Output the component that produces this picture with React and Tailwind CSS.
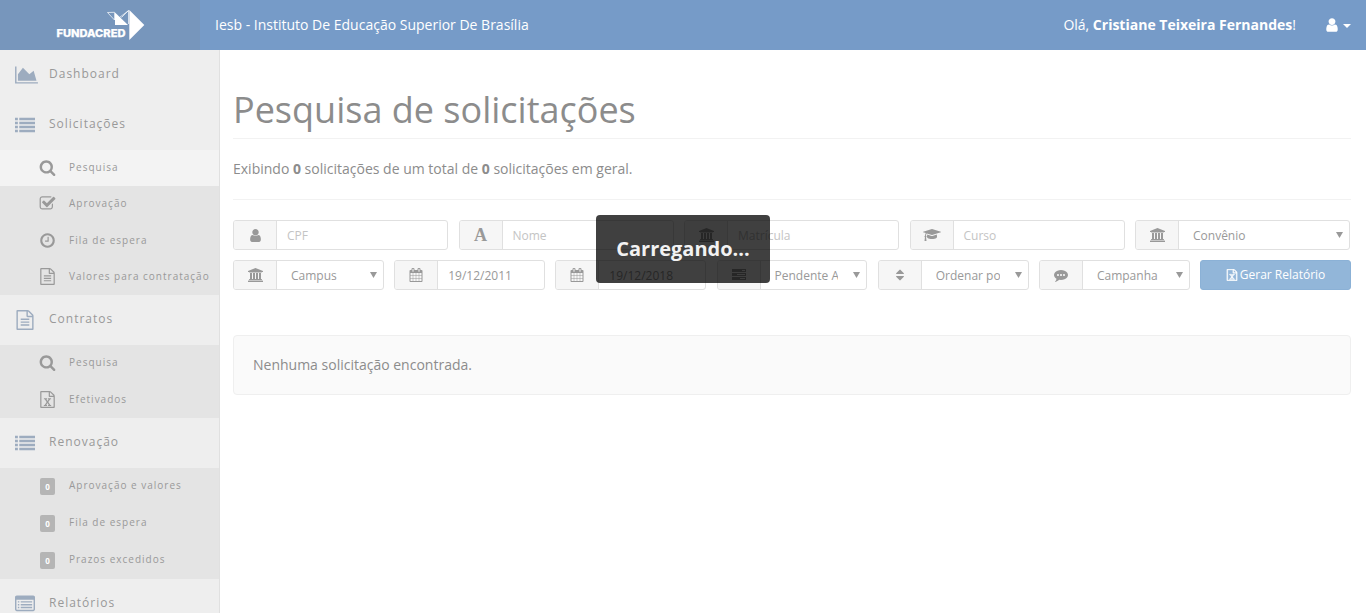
import React from "react";

const FILE_BASE =
  "M1596 380q28 28 48 76t20 88v1152q0 40-28 68t-68 28h-1344q-40 0-68-28t-28-68v-1600q0-40 28-68t68-28h896q40 0 88 20t76 48zm-444-244v376h376q-10-29-22-41l-313-313q-12-12-41-22zm384 1528v-1024h-416q-40 0-68-28t-28-68v-416h-768v1536h1280z";
const DOT = "q0-53-37.5-90.5t-90.5-37.5-90.5 37.5-37.5 90.5 37.5 90.5 90.5 37.5 90.5-37.5 37.5-90.5z";

const ICONS = {
  area: [2048, "M2048 1536v128h-2048v-1536h128v1408h1920zm-384-1024l256 896h-1664v-576l448-576 576 576z"],
  list: [
    1792,
    "M0 1312h256v224h-256zM0 960h256v224h-256zM0 608h256v224h-256zM0 256h256v224h-256zM384 1312h1408v224h-1408zM384 960h1408v224h-1408zM384 608h1408v224h-1408zM384 256h1408v224h-1408z",
  ],
  search: [
    1792,
    "M1216 832q0-185-131.5-316.5t-316.5-131.5-316.5 131.5-131.5 316.5 131.5 316.5 316.5 131.5 316.5-131.5 131.5-316.5zm512 832q0 52-38 90t-90 38q-54 0-90-38l-343-342q-179 124-399 124-143 0-273.5-55.5t-225-150-150-225-55.5-273.5 55.5-273.5 150-225 225-150 273.5-55.5 273.5 55.5 225 150 150 225 55.5 273.5q0 220-124 399l343 343q37 37 37 90z",
  ],
  check: [
    1792,
    "M1472 930v318q0 119-84.5 203.5t-203.5 84.5h-832q-119 0-203.5-84.5t-84.5-203.5v-832q0-119 84.5-203.5t203.5-84.5h832q63 0 117 25 15 7 18 23 3 17-9 29l-49 49q-10 10-23 10-3 0-9-2-23-6-45-6h-832q-66 0-113 47t-47 113v832q0 66 47 113t113 47h832q66 0 113-47t47-113v-254q0-13 9-22l64-64q10-10 23-10 6 0 12 3 20 8 20 29zm231-489l-814 814q-24 24-57 24t-57-24l-430-430q-24-24-24-57t24-57l110-110q24-24 57-24t57 24l263 263 647-647q24-24 57-24t57 24l110 110q24 24 24 57t-24 57z",
  ],
  clock: [
    1792,
    "M1024 544v448q0 14-9 23t-23 9h-320q-14 0-23-9t-9-23v-64q0-14 9-23t23-9h224v-352q0-14 9-23t23-9h64q14 0 23 9t9 23zm416 352q0-148-73-273t-198-198-273-73-273 73-198 198-73 273 73 273 198 198 273 73 273-73 198-198 73-273zm224 0q0 209-103 385.5t-279.5 279.5-385.5 103-385.5-103-279.5-279.5-103-385.5 103-385.5 279.5-279.5 385.5-103 385.5 103 279.5 279.5 103 385.5z",
  ],
  file: [1792, FILE_BASE + "M512 768h768v128h-768zM512 1024h768v128h-768zM512 1280h768v128h-768z"],
  excel: [
    1792,
    FILE_BASE +
      "M520 768h330v100h-75l121 190 121-190h-75v-100h330v100h-85l-205 300 215 310h85v106h-330v-106h80l-136-210-136 210h80v106h-330v-106h85l215-310-205-300h-85z",
  ],
  listAlt: [
    1792,
    "M256 1152h128v128h-128zM256 896h128v128h-128zM256 640h128v128h-128zM512 1152h1024v128h-1024zM512 896h1024v128h-1024zM512 640h1024v128h-1024zM1664 1376v-864h-1536v864q0 32 32 32h1472q32 0 32-32zM1792 288v1088q0 66-47 113t-113 47h-1472q-66 0-113-47t-47-113v-1088q0-66 47-113t113-47h1472q66 0 113 47t47 113z",
  ],
  user: [
    1792,
    "M1536 1399q0 109-62.5 187t-150.5 78h-854q-88 0-150.5-78t-62.5-187q0-85 8.5-160.5t31.5-152 58.5-131 94-89 134.5-34.5q131 128 313 128t313-128q76 0 134.5 34.5t94 89 58.5 131 31.5 152 8.5 160.5zm-256-887q0 159-112.5 271.5t-271.5 112.5-271.5-112.5-112.5-271.5 112.5-271.5 271.5-112.5 271.5 112.5 112.5 271.5z",
  ],
  bank: [
    1920,
    "M960 0l960 384v128h-128q0 26-20.5 45t-48.5 19h-1526q-28 0-48.5-19t-20.5-45h-128v-128zm-704 640h256v768h128v-768h256v768h128v-768h256v768h128v-768h256v768h59q28 0 48.5 19t20.5 45v64h-1664v-64q0-26 20.5-45t48.5-19h59v-768zm1595 960q28 0 48.5 19t20.5 45v128h-1920v-128q0-26 20.5-45t48.5-19h1782z",
  ],
  cap: [
    2304,
    "M1774 836l18 316q4 69-82 128t-235 93.5-323 34.5-323-34.5-235-93.5-82-128l18-316 574 181q22 7 48 7t48-7zm530-324q0 23-22 31l-1120 352q-4 1-10 1t-10-1l-652-206q-43 34-71 111.5t-34 178.5q63 36 63 109 0 69-58 107l58 433q2 14-8 25-9 11-24 11h-192q-15 0-24-11-10-11-8-25l58-433q-58-38-58-107 0-73 65-111 11-207 98-330l-333-104q-22-8-22-31t22-31l1120-352q4-1 10-1t10 1l1120 352q22 8 22 31z",
  ],
  calendar: [
    1792,
    "M192 1664h288v-288h-288v288zm352 0h320v-288h-320v288zm-352-352h288v-320h-288v320zm352 0h320v-320h-320v320zm-352-384h288v-288h-288v288zm736 736h320v-288h-320v288zm-384-736h320v-288h-320v288zm768 736h288v-288h-288v288zm-384-352h320v-320h-320v320zm-352-864v-288q0-13-9.5-22.5t-22.5-9.5h-64q-13 0-22.5 9.5t-9.5 22.5v288q0 13 9.5 22.5t22.5 9.5h64q13 0 22.5-9.5t9.5-22.5zm736 864h288v-320h-288v320zm-384-384h320v-288h-320v288zm384 0h288v-288h-288v288zm32-480v-288q0-13-9.5-22.5t-22.5-9.5h-64q-13 0-22.5 9.5t-9.5 22.5v288q0 13 9.5 22.5t22.5 9.5h64q13 0 22.5-9.5t9.5-22.5zm384-64v1280q0 52-38 90t-90 38h-1408q-52 0-90-38t-38-90v-1280q0-52 38-90t90-38h128v-96q0-66 47-113t113-47h64q66 0 113 47t47 113v96h384v-96q0-66 47-113t113-47h64q66 0 113 47t47 113v96h128q52 0 90 38t38 90z",
  ],
  tasks: [
    1792,
    "M1024 1408h640v-128h-640zM640 896h1024v-128h-1024zM1280 384h384v-128h-384zM0 1152h1792v384h-1792zM0 640h1792v384h-1792zM0 128h1792v384h-1792z",
  ],
  sort: [
    1792,
    "M1408 1088q0 26-19 45l-448 448q-19 19-45 19t-45-19l-448-448q-19-19-19-45t19-45 45-19h896q26 0 45 19t19 45zM1408 704q0 26-19 45t-45 19h-896q-26 0-45-19t-19-45 19-45l448-448q19-19 45-19t45 19l448 448q19 19 19 45z",
  ],
  comment: [
    1792,
    "M640 896" + DOT + "m384 0" + DOT + "m384 0" + DOT +
      "m384 0q0 174-120 321.5t-326 233-450 85.5q-110 0-211-18-173 173-435 229-52 10-86 13-12 1-22-6t-13-18q-4-15 20-37 5-5 23.5-21.5t25.5-23.5 23.5-25.5 24-31.5 20.5-37 20-48 14.5-57.5 12.5-72.5q-146-90-229.5-216.5t-83.5-269.5q0-174 120-321.5t326-233 450-85.5 450 85.5 326 233 120 321.5z",
  ],
};

function Icon({ name, className }) {
  const [w, d] = ICONS[name];
  return (
    <svg viewBox={`0 0 ${w} 1792`} className={className} fill="currentColor" fillRule="evenodd" aria-hidden="true">
      <path d={d} />
    </svg>
  );
}

function MenuItem({ icon, label, size }) {
  return (
    <a className="flex h-[50px] items-center pb-[3px] pl-[15px] text-[12px] tracking-[1px] text-[#999]">
      <span className="flex w-[34px] shrink-0 pt-[2px] text-[#9dacbf]">
        <Icon name={icon} className={size} />
      </span>
      {label}
    </a>
  );
}

function SubItem({ icon, label, active, height = "h-[36.4px]" }) {
  return (
    <a
      className={`flex ${height} items-center whitespace-nowrap pl-[39px] text-[10px] tracking-[1px] text-[#999] ${
        active ? "bg-[#f3f3f3]" : ""
      }`}
    >
      <span className="flex w-[30px] shrink-0 pb-px text-[#999]">
        <Icon name={icon} className="size-[17px]" />
      </span>
      <span className="pb-px">{label}</span>
    </a>
  );
}

function CountItem({ label }) {
  return (
    <a className="flex h-[37px] items-center whitespace-nowrap pl-10 text-[10px] tracking-[1px] text-[#999]">
      <span className="mr-3.5 flex h-[17px] w-[15px] items-center justify-center rounded-[2px] bg-[#b5b5b5] text-[8px] font-bold tracking-normal text-white">
        0
      </span>
      <span className="pb-0.5">{label}</span>
    </a>
  );
}

function Group({ icon, iconSize = "size-[14px]", children, select, placeholder }) {
  return (
    <div className="flex h-[30px] min-w-0 overflow-hidden rounded-[3px] border border-[#e0e0e0] bg-white text-[12px]">
      <div className="flex w-[43px] shrink-0 items-center justify-center border-r border-[#e0e0e0] bg-[#f6f6f6] text-[#999]">
        {icon === "font" ? (
          <span className="font-['Liberation_Serif',serif] text-[18px] font-bold leading-none">A</span>
        ) : (
          <Icon name={icon} className={iconSize} />
        )}
      </div>
      {select ? (
        <div className="flex min-w-0 flex-1 items-center pl-[14px] pr-[6px] pt-0.5 text-[#999]">
          <span className="min-w-0 flex-1 overflow-hidden whitespace-nowrap">{children}</span>
          <svg viewBox="0 0 7 6" className="mb-[3px] ml-[15px] h-[6px] w-[7px] shrink-0" fill="#999">
            <path d="M0 0h7L3.5 6z" />
          </svg>
        </div>
      ) : (
        <div className={`flex items-center pl-2.5 pt-0.5 ${placeholder ? "text-[#c4c4c4]" : "text-[#999]"}`}>{children}</div>
      )}
    </div>
  );
}

function Logo() {
  return (
    <div className="flex h-[50px] w-[200px] shrink-0 items-center bg-[#7796bc] pl-14">
      <svg viewBox="0 0 90 32" className="h-8 w-[90px]" fill="#fff" aria-label="Fundacred">
        <text x="0.5" y="28" fontFamily="Inter, sans-serif" fontWeight="800" fontSize="10.8" stroke="#fff" strokeWidth="0.25" textLength="69" lengthAdjust="spacingAndGlyphs">
          FUNDACRED
        </text>
        <path d="M73.3 1L88.3 16L73.3 31z" />
        <path d="M59 3.5L72 16H59z" />
        <path d="M51.5 3.5L58.5 3.3V11zM59 12L72.5 1.5M65.5 8.5L72.5 1.5V15" fill="none" stroke="#fff" strokeWidth="0.7" />
      </svg>
    </div>
  );
}

export default function App() {
  return (
    <div className="relative flex h-[613px] w-full flex-col overflow-hidden bg-white font-['Open_Sans',sans-serif] text-[#8c8c8c]">
      <header className="flex h-[50px] shrink-0 items-center bg-[#769bc8] text-[14px] text-white">
        <Logo />
        <span className="pb-0.5 pl-[15px]">Iesb - Instituto De Educação Superior De Brasília</span>
        <span className="ml-auto pb-0.5">
          Olá, <b>Cristiane Teixeira Fernandes</b>!
        </span>
        <span className="ml-[28px] mr-[15px] flex items-center pb-px">
          <Icon name="user" className="size-4" />
          <svg viewBox="0 0 8 4" className="ml-[3px] mt-0.5 h-1 w-2" fill="#fff">
            <path d="M0 0h8L4 4z" />
          </svg>
        </span>
      </header>

      <div className="flex min-h-0 flex-1">
        <nav className="w-[220px] shrink-0 overflow-hidden border-r border-[#e0e0e0] bg-[#eee]">
          <MenuItem icon="area" label="Dashboard" size="h-5 w-[23px]" />
          <MenuItem icon="list" label="Solicitações" size="size-5" />
          <div className="h-[145px] bg-[#e4e4e4]">
            <SubItem icon="search" label="Pesquisa" active height="h-[36px]" />
            <SubItem icon="check" label="Aprovação" />
            <SubItem icon="clock" label="Fila de espera" />
            <SubItem icon="file" label="Valores para contratação" />
          </div>
          <MenuItem icon="file" label="Contratos" size="size-5" />
          <div className="h-[73px] bg-[#e4e4e4]">
            <SubItem icon="search" label="Pesquisa" />
            <SubItem icon="excel" label="Efetivados" />
          </div>
          <MenuItem icon="list" label="Renovação" size="size-5" />
          <div className="h-[111px] bg-[#e4e4e4]">
            <CountItem label="Aprovação e valores" />
            <CountItem label="Fila de espera" />
            <CountItem label="Prazos excedidos" />
          </div>
          <MenuItem icon="listAlt" label="Relatórios" size="size-5" />
        </nav>

        <main className="min-w-0 flex-1 pl-[13px] pr-[15px] pt-[39px]">
          <h1 className="h-[50px] border-b border-[#f2f2f2] text-[36px] leading-[42px]">Pesquisa de solicitações</h1>
          <p className="flex h-[61px] items-center border-b border-[#f2f2f2] pb-0.5 text-[14px]">
            <span>
              Exibindo <b>0</b> solicitações de um total de <b>0</b> solicitações em geral.
            </span>
          </p>

          <div className="mr-px mt-5 grid grid-cols-5 gap-x-[10.5px]">
            <Group icon="user" iconSize="size-[15px]" placeholder>CPF</Group>
            <Group icon="font" placeholder>Nome</Group>
            <Group icon="bank" iconSize="h-[14px] w-[15px]" placeholder>Matrícula</Group>
            <Group icon="cap" iconSize="h-[14px] w-[18px]" placeholder>Curso</Group>
            <Group icon="bank" iconSize="h-[14px] w-[15px]" select>Convênio</Group>
          </div>
          <div className="mt-2.5 grid grid-cols-7 gap-x-[10.3px]">
            <Group icon="bank" iconSize="h-[14px] w-[15px]" select>Campus</Group>
            <Group icon="calendar">19/12/2011</Group>
            <Group icon="calendar">19/12/2018</Group>
            <Group icon="tasks" select>Pendente A</Group>
            <Group icon="sort" select>Ordenar po</Group>
            <Group icon="comment" select>Campanha</Group>
            <button className="flex h-[30px] items-center justify-center gap-[2px] rounded-[3px] border border-[#8bb1d6] bg-[#92b6d9] pb-px text-[12px] text-white">
              <Icon name="excel" className="size-3 stroke-white stroke-[60]" />
              Gerar Relatório
            </button>
          </div>

          <div className="mt-[45px] flex h-[60px] items-center rounded-[4px] border border-[#efefef] bg-[#fafafa] pb-0.5 pl-[19px] text-[14px]">
            Nenhuma solicitação encontrada.
          </div>
        </main>
      </div>

      <div className="absolute left-[596px] top-[215px] flex h-[68px] w-[174px] items-center justify-center rounded-[4px] bg-black/75 text-[20px] font-bold text-[#f2f2f2]">
        Carregando...
      </div>
    </div>
  );
}
